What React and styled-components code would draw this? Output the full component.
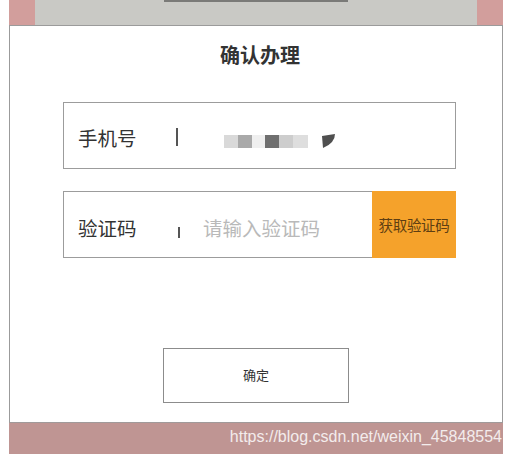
import React from 'react';
import styled, { createGlobalStyle } from 'styled-components';

const Global = createGlobalStyle`
  body {
    margin: 0;
    background: #fff;
    font-family: "Noto Sans CJK SC", "Noto Sans", sans-serif;
  }
`;

const Page = styled.div`
  width: 513px;
  height: 454px;
  overflow: hidden;
`;

const TopBand = styled.div`
  display: flex;
  height: 25px;
  margin-left: 9px;
  width: 494px;
`;

const Side = styled.div`
  width: 26px;
  background: #d29e9c;
`;

const Backdrop = styled.div`
  flex: 1;
  display: flex;
  justify-content: center;
  background: #c9c9c5;
`;

const Handle = styled.div`
  width: 184px;
  height: 2px;
  background: #7a7a78;
`;

const Modal = styled.div`
  box-sizing: border-box;
  margin-left: 9px;
  width: 494px;
  height: 398px;
  border: 1px solid #9b9b9b;
  border-bottom-color: #a09a9a;
  background: #fff;
  display: flex;
  flex-direction: column;
  align-items: flex-start;
`;

const Title = styled.h2`
  align-self: center;
  margin: 15px 0 0 8px;
  font-size: 20px;
  line-height: 28px;
  font-weight: bold;
  color: #333;
`;

const Field = styled.div`
  box-sizing: border-box;
  display: flex;
  align-items: center;
  width: 393px;
  height: 67px;
  margin: ${p => p.$top}px 0 0 53px;
  border: 1px solid #9c9c9c;
  padding-left: 14px;
`;

const Label = styled.span`
  width: 60px;
  font-size: 19.5px;
  line-height: 24px;
  color: #333;
  padding-top: ${p => p.$shift}px;
`;

const Divider = styled.span`
  width: 2px;
  height: ${p => p.$h}px;
  margin-left: ${p => p.$left}px;
  margin-top: ${p => p.$shift}px;
  background: #555;
`;

const Placeholder = styled.span`
  margin-left: 23px;
  font-size: 19.5px;
  line-height: 24px;
  color: #b9b9b9;
  padding-top: 6px;
  flex: 1;
`;

const Mask = styled.svg`
  margin: 10px 0 0 46px;
`;

const CodeButton = styled.button`
  align-self: stretch;
  width: 84px;
  margin: -1px -1px -1px 0;
  border: none;
  background: #f5a22b;
  color: #5e3e12;
  font-family: inherit;
  font-size: 14.5px;
  padding: 0;
  letter-spacing: -0.3px;
`;

const Confirm = styled.button`
  box-sizing: border-box;
  width: 186px;
  height: 55px;
  margin: 90px 0 0 153px;
  border: 1px solid #8c8c8c;
  background: #fff;
  font-family: inherit;
  font-size: 13px;
  color: #333;
  padding-bottom: 3px;
`;

const BottomBand = styled.div`
  margin-left: 9px;
  width: 494px;
  height: 31px;
  background: #bf9593;
  display: flex;
  justify-content: flex-end;
  align-items: flex-start;
`;

const Watermark = styled.span`
  font-family: "Liberation Sans", Arial, sans-serif;
  font-size: 16px;
  line-height: 20px;
  margin: 4px 1px 0 0;
  color: #f3ecec;
  white-space: nowrap;
`;

const blocks = [
  ['#d9d9d9', 0, 14],
  ['#a9a9a9', 14, 14],
  ['#efefef', 28, 13],
  ['#6f6f6f', 41, 14],
  ['#cdcdcd', 55, 14],
  ['#dedede', 69, 15],
];

export default function App() {
  return (
    <Page>
      <Global />
      <TopBand>
        <Side />
        <Backdrop>
          <Handle />
        </Backdrop>
        <Side />
      </TopBand>
      <Modal>
        <Title>确认办理</Title>
        <Field $top={33}>
          <Label $shift={4}>手机号</Label>
          <Divider $left={38} $h={18} $shift={2} />
          <Mask width="112" height="14" viewBox="0 0 112 14">
            {blocks.map(([c, x, w]) => (
              <rect key={x} x={x} y="1" width={w} height="13" fill={c} />
            ))}
            <path d="M98 2 L111 0 Q111 9 99 14 Z" fill="#4f4f4f" />
          </Mask>
        </Field>
        <Field $top={22}>
          <Label $shift={6}>验证码</Label>
          <Divider $left={40} $h={11} $shift={16} />
          <Placeholder>请输入验证码</Placeholder>
          <CodeButton>获取验证码</CodeButton>
        </Field>
        <Confirm>确定</Confirm>
      </Modal>
      <BottomBand>
        <Watermark>https://blog.csdn.net/weixin_45848554</Watermark>
      </BottomBand>
    </Page>
  );
}
